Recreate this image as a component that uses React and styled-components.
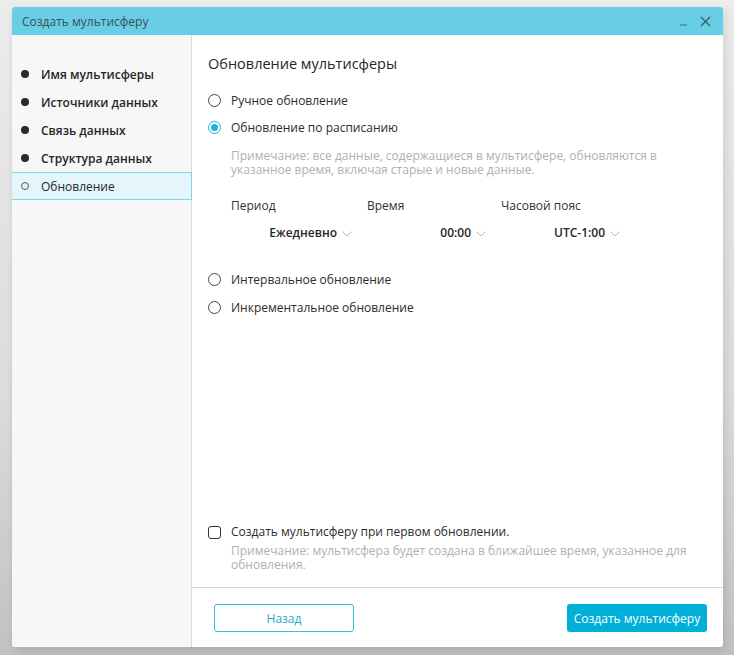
import React, { useState } from 'react'
import styled, { createGlobalStyle } from 'styled-components'

const GlobalStyle = createGlobalStyle`
  html, body {
    margin: 0;
    padding: 0;
    height: 100%;
  }
  body {
    background: linear-gradient(180deg, #ececec 0%, #dcdcdc 60%, #c2c2c2 100%);
    font-family: 'Open Sans', 'Noto Sans', sans-serif;
    color: #2b2b2b;
  }
  #root {
    padding: 7px 0 0 12px;
  }
`

const steps = ['Имя мультисферы', 'Источники данных', 'Связь данных', 'Структура данных', 'Обновление']

const modes = [
  'Ручное обновление',
  'Обновление по расписанию',
  'Интервальное обновление',
  'Инкрементальное обновление',
]

export default function App() {
  const [mode, setMode] = useState(1)
  const [createNow, setCreateNow] = useState(false)

  return (
    <>
      <GlobalStyle />
      <Window>
        <Header>
          <HeaderTitle>Создать мультисферу</HeaderTitle>
          <HeaderControls>
            <Minimize />
            <CloseIcon width="11" height="11" viewBox="0 0 11 11">
              <path d="M1 1 L10 10 M10 1 L1 10" stroke="#3f5a63" strokeWidth="1.3" fill="none" />
            </CloseIcon>
          </HeaderControls>
        </Header>
        <Body>
          <Sidebar>
            {steps.map((s, i) => (
              <Step key={s} active={i === steps.length - 1}>
                <Dot active={i === steps.length - 1} />
                {s}
              </Step>
            ))}
          </Sidebar>
          <Main>
            <Content>
              <Title>Обновление мультисферы</Title>
              <RadioList>
                {modes.slice(0, 2).map((m, i) => (
                  <RadioRow key={m} onClick={() => setMode(i)}>
                    <Radio checked={mode === i} />
                    {m}
                  </RadioRow>
                ))}
              </RadioList>
              <Note>
                Примечание: все данные, содержащиеся в мультисфере, обновляются в
                <br />
                указанное время, включая старые и новые данные.
              </Note>
              <Schedule>
                <FieldLabel>Период</FieldLabel>
                <FieldLabel>Время</FieldLabel>
                <FieldLabel>Часовой пояс</FieldLabel>
                <Select>Ежедневно<Chevron /></Select>
                <Select>00:00<Chevron /></Select>
                <Select>UTC-1:00<Chevron /></Select>
              </Schedule>
              <RadioList spaced>
                {modes.slice(2).map((m, i) => (
                  <RadioRow key={m} tall onClick={() => setMode(i + 2)}>
                    <Radio checked={mode === i + 2} />
                    {m}
                  </RadioRow>
                ))}
              </RadioList>
              <Bottom>
                <CheckRow onClick={() => setCreateNow(!createNow)}>
                  <Checkbox checked={createNow} />
                  Создать мультисферу при первом обновлении.
                </CheckRow>
                <Note tight>
                  Примечание: мультисфера будет создана в ближайшее время, указанное для
                  <br />
                  обновления.
                </Note>
              </Bottom>
            </Content>
            <Footer>
              <OutlineButton>Назад</OutlineButton>
              <PrimaryButton>Создать мультисферу</PrimaryButton>
            </Footer>
          </Main>
        </Body>
      </Window>
    </>
  )
}

function Chevron() {
  return (
    <ChevronSvg width="10" height="6" viewBox="0 0 10 6">
      <path d="M0.5 0.5 L5 5 L9.5 0.5" stroke="#b8b8b8" strokeWidth="1" fill="none" />
    </ChevronSvg>
  )
}

const Window = styled.div`
  width: 711px;
  height: 640px;
  background: #fff;
  border-radius: 3px;
  overflow: hidden;
  display: flex;
  flex-direction: column;
  box-shadow: 2px 4px 10px rgba(0, 0, 0, 0.12);
`

const Header = styled.div`
  height: 28px;
  flex: none;
  background: #67cee6;
  display: flex;
  align-items: center;
  justify-content: space-between;
  padding: 0 12px 0 10px;
`

const HeaderTitle = styled.span`
  font-size: 12px;
  color: #3d4f55;
`

const HeaderControls = styled.div`
  display: flex;
  align-items: center;
  gap: 13px;
`

const Minimize = styled.span`
  display: block;
  width: 7px;
  height: 2px;
  margin-top: 7px;
  background: #4d9fb3;
`

const CloseIcon = styled.svg`
  display: block;
`

const Body = styled.div`
  flex: 1;
  display: flex;
  min-height: 0;
`

const Sidebar = styled.div`
  width: 180px;
  flex: none;
  box-sizing: border-box;
  background: #f7f7f7;
  border-right: 1px solid #dadada;
  padding-top: 25px;
  display: flex;
  flex-direction: column;
`

const Step = styled.div`
  height: 28px;
  box-sizing: border-box;
  display: flex;
  align-items: center;
  gap: 12px;
  padding-left: 9px;
  font-size: 12px;
  color: #262626;
  background: ${(p) => (p.active ? '#e4f6fb' : 'transparent')};
  border: 1px solid ${(p) => (p.active ? '#7fd6ea' : 'transparent')};
  border-left: none;
  margin-right: -1px;
  font-weight: ${(p) => (p.active ? 500 : 600)};
`

const Dot = styled.span`
  width: 8px;
  height: 8px;
  border-radius: 50%;
  box-sizing: border-box;
  background: ${(p) => (p.active ? 'transparent' : '#2a2a2a')};
  border: ${(p) => (p.active ? '1px solid #555' : 'none')};
`

const Main = styled.div`
  flex: 1;
  display: flex;
  flex-direction: column;
`

const Content = styled.div`
  flex: 1;
  display: flex;
  flex-direction: column;
  padding: 19px 16px 15px 16px;
`

const Title = styled.h2`
  margin: 0;
  font-size: 14.5px;
  line-height: 20px;
  font-weight: 500;
  color: #262626;
`

const RadioList = styled.div`
  display: flex;
  flex-direction: column;
  margin-top: ${(p) => (p.spaced ? '24px' : '13px')};
`

const RadioRow = styled.label`
  height: ${(p) => (p.tall ? '28px' : '27px')};
  display: flex;
  align-items: center;
  gap: 10px;
  font-size: 12px;
  color: #2b2b2b;
  cursor: pointer;
`

const Radio = styled.span`
  width: 13px;
  height: 13px;
  box-sizing: border-box;
  border-radius: 50%;
  border: 1.3px solid ${(p) => (p.checked ? '#1bb3d9' : '#444')};
  display: flex;
  align-items: center;
  justify-content: center;
  &::after {
    content: '';
    width: 7px;
    height: 7px;
    border-radius: 50%;
    background: ${(p) => (p.checked ? '#1bb3d9' : 'transparent')};
  }
`

const Note = styled.p`
  margin: ${(p) => (p.tight ? '3px' : '8px')} 0 0 23px;
  font-size: 12px;
  line-height: 14px;
  color: #b0b0b0;
`

const Schedule = styled.div`
  display: grid;
  grid-template-columns: 136px 134px 134px;
  row-gap: 11px;
  margin: 21px 0 0 23px;
`

const FieldLabel = styled.span`
  font-size: 12px;
  line-height: 16px;
  color: #333;
`

const Select = styled.span`
  justify-self: end;
  padding-right: 15px;
  display: flex;
  align-items: center;
  gap: 5px;
  font-size: 12px;
  line-height: 16px;
  font-weight: 600;
  color: #262626;
`

const ChevronSvg = styled.svg`
  display: block;
  margin-top: 1px;
`

const Bottom = styled.div`
  margin-top: auto;
  display: flex;
  flex-direction: column;
`

const CheckRow = styled.label`
  display: flex;
  align-items: center;
  gap: 10px;
  font-size: 12px;
  line-height: 18px;
  color: #2b2b2b;
  cursor: pointer;
`

const Checkbox = styled.span`
  width: 13px;
  height: 13px;
  box-sizing: border-box;
  border: 1.4px solid #333;
  border-radius: 3px;
  background: ${(p) => (p.checked ? '#1bb3d9' : '#fff')};
`

const Footer = styled.div`
  height: 60px;
  flex: none;
  box-sizing: border-box;
  border-top: 1px solid #d6d6d6;
  display: flex;
  align-items: flex-start;
  justify-content: space-between;
  padding: 16px 16px 0 22px;
`

const BaseButton = styled.button`
  width: 140px;
  height: 28px;
  padding: 0;
  border-radius: 3px;
  font-family: 'Open Sans', 'Noto Sans', sans-serif;
  font-size: 12px;
  white-space: nowrap;
  cursor: pointer;
`

const OutlineButton = styled(BaseButton)`
  background: #fff;
  border: 1px solid #3cbddd;
  color: #2aa6c9;
`

const PrimaryButton = styled(BaseButton)`
  background: #00b0d8;
  border: none;
  color: #fff;
`
